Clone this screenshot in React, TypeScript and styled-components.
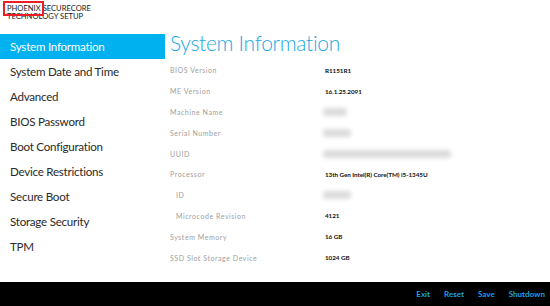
import * as React from "react";
import styled, { createGlobalStyle } from "styled-components";

const GlobalStyle = createGlobalStyle`
  html, body {
    margin: 0;
    padding: 0;
    background: #ffffff;
    font-family: Lato, "Open Sans", sans-serif;
  }
`;

type Row = { label: string; value?: string; blur?: number; indent?: boolean };

const menu = [
  "System Information",
  "System Date and Time",
  "Advanced",
  "BIOS Password",
  "Boot Configuration",
  "Device Restrictions",
  "Secure Boot",
  "Storage Security",
  "TPM",
];

const rows: Row[] = [
  { label: "BIOS Version", value: "R1151R1" },
  { label: "ME Version", value: "16.1.25.2091" },
  { label: "Machine Name", blur: 24 },
  { label: "Serial Number", blur: 28 },
  { label: "UUID", blur: 128 },
  { label: "Processor", value: "13th Gen Intel(R) Core(TM) i5-1345U" },
  { label: "ID", blur: 28, indent: true },
  { label: "Microcode Revision", value: "4121", indent: true },
  { label: "System Memory", value: "16 GB" },
  { label: "SSD Slot Storage Device", value: "1024 GB" },
];

const actions = ["Exit", "Reset", "Save", "Shutdown"];

export default function App() {
  return (
    <Page>
      <GlobalStyle />
      <Header>
        <Brand>
          <Line>
            <Boxed>PHOENIX</Boxed> SECURECORE
          </Line>
          <Line>TECHNOLOGY SETUP</Line>
        </Brand>
      </Header>
      <Body>
        <Sidebar>
          {menu.map((item, i) => (
            <MenuItem key={item} $active={i === 0}>
              {item}
            </MenuItem>
          ))}
        </Sidebar>
        <Main>
          <Title>System Information</Title>
          <Table>
            {rows.map((row) => (
              <InfoRow key={row.label}>
                <Label $indent={row.indent}>{row.label}</Label>
                {row.value ? (
                  <Value>{row.value}</Value>
                ) : (
                  <Blurred style={{ width: row.blur }} />
                )}
              </InfoRow>
            ))}
          </Table>
        </Main>
      </Body>
      <Footer>
        {actions.map((a) => (
          <Action key={a}>{a}</Action>
        ))}
      </Footer>
    </Page>
  );
}

const Page = styled.div`
  width: 550px;
  height: 306px;
  display: flex;
  flex-direction: column;
  overflow: hidden;
`;

const Header = styled.div`
  height: 34px;
  padding: 5px 0 0 7px;
  box-sizing: border-box;
`;

const Brand = styled.div`
  font-size: 7.6px;
  line-height: 7.6px;
  color: #222;
`;

const Line = styled.div`
  white-space: nowrap;
`;

const Boxed = styled.span`
  position: relative;
  &::after {
    content: "";
    position: absolute;
    left: -4px;
    right: -3px;
    top: -2px;
    bottom: -3px;
    border: 2px solid #ee1c25;
  }
`;

const Body = styled.div`
  flex: 1;
  display: flex;
`;

const Sidebar = styled.div`
  width: 165px;
  display: flex;
  flex-direction: column;
`;

const MenuItem = styled.div<{ $active?: boolean }>`
  height: 25px;
  line-height: 25px;
  padding-left: 10px;
  font-size: 11.6px;
  letter-spacing: -0.25px;
  color: ${(p) => (p.$active ? "#ffffff" : "#2a2a2a")};
  background: ${(p) => (p.$active ? "#00b1ef" : "transparent")};
`;

const Main = styled.div`
  flex: 1;
  padding-left: 5px;
`;

const Title = styled.div`
  font-size: 21px;
  font-weight: 300;
  line-height: 22px;
  height: 28px;
  margin-top: -2px;
  letter-spacing: -0.3px;
  color: #1aa8e3;
`;

const Table = styled.div`
  display: flex;
  flex-direction: column;
`;

const InfoRow = styled.div`
  height: 20.8px;
  display: flex;
  align-items: center;
`;

const Label = styled.div<{ $indent?: boolean }>`
  width: 155px;
  padding-left: ${(p) => (p.$indent ? "6px" : "0")};
  box-sizing: border-box;
  font-size: 7px;
  letter-spacing: 0.55px;
  color: #a0a0a0;
`;

const Value = styled.div`
  font-size: 6.3px;
  font-weight: 700;
  letter-spacing: -0.05px;
  color: #111;
`;

const Blurred = styled.div`
  height: 8px;
  margin-left: -2px;
  background: #dcdcdc;
  border-radius: 3px;
  filter: blur(2px);
`;

const Footer = styled.div`
  height: 24px;
  background: #000;
  display: flex;
  justify-content: flex-end;
  align-items: center;
  gap: 14px;
  padding-right: 5px;
`;

const Action = styled.div`
  font-size: 8px;
  font-weight: 700;
  color: #1e9fe2;
`;
